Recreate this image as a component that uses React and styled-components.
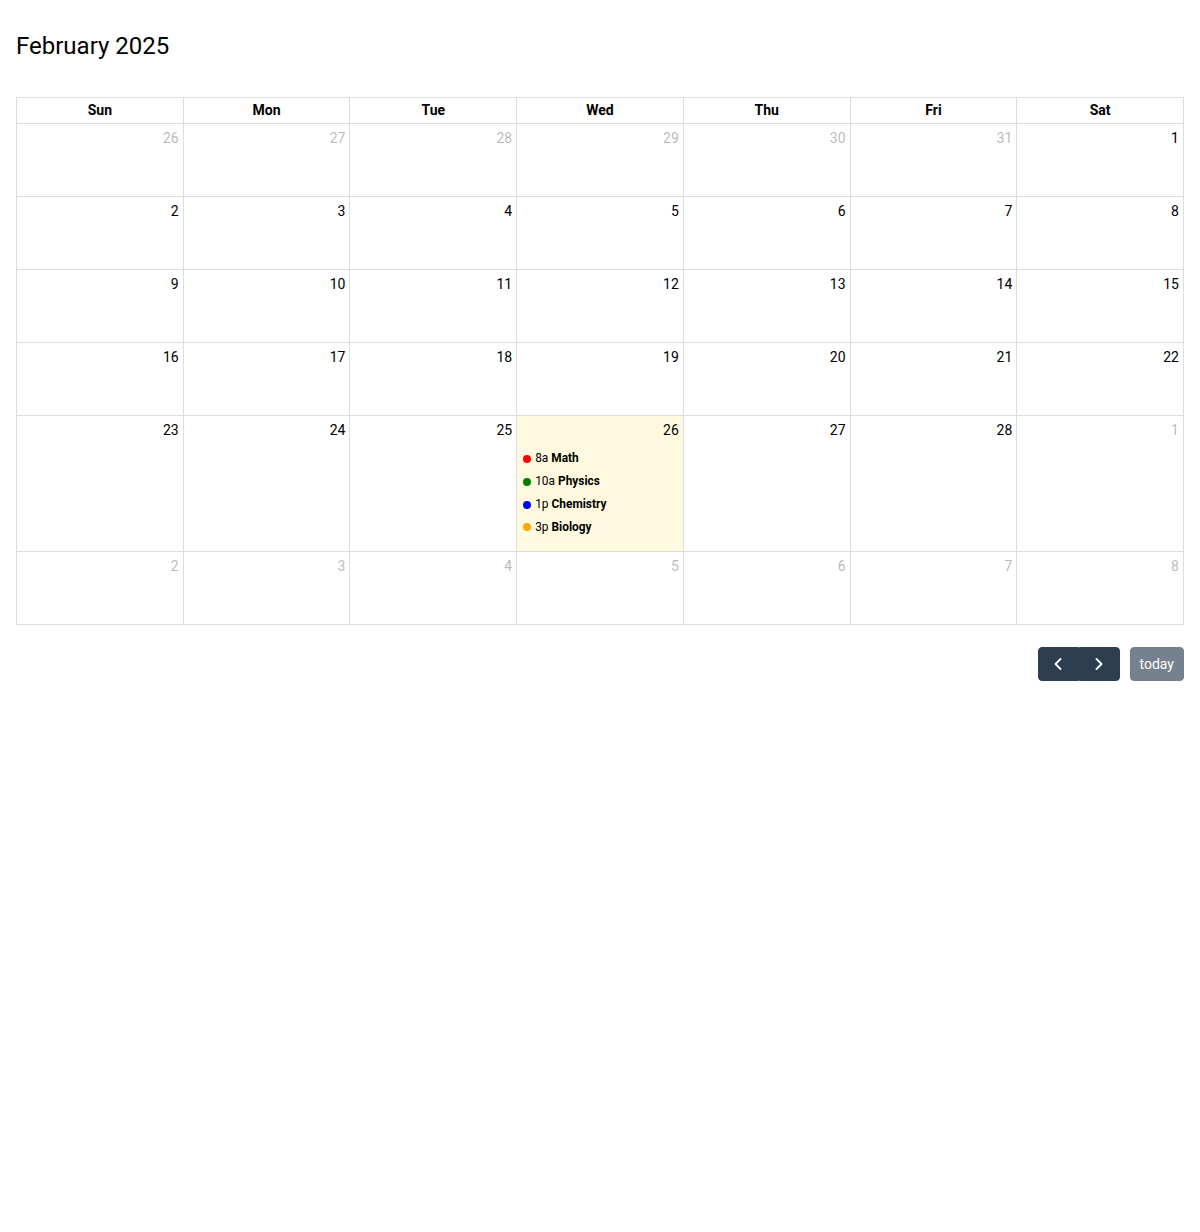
import React from "react";
import styled, { createGlobalStyle } from "styled-components";

const GlobalStyle = createGlobalStyle`
    body {
        margin: 0;
        font-family: Roboto, "Liberation Sans", Arial, sans-serif;
        font-size: 14px;
        color: #000;
        background: #fff;
    }
`;

const Page = styled.div`
    padding: 16px;
`;

const Title = styled.h2`
    margin: 16px 0 36px;
    font-size: 24px;
    font-weight: 400;
    line-height: 29px;
`;

const Grid = styled.div`
    display: grid;
    grid-template-columns: repeat(7, 1fr);
    border-left: 1px solid #ddd;
    border-top: 1px solid #ddd;
`;

const HeadCell = styled.div`
    border-right: 1px solid #ddd;
    border-bottom: 1px solid #ddd;
    padding: 2px 4px;
    font-weight: 700;
    line-height: 21px;
    text-align: center;
`;

const DayCell = styled.div`
    border-right: 1px solid #ddd;
    border-bottom: 1px solid #ddd;
    min-height: 72px;
    display: flex;
    flex-direction: column;
    background: ${({ today }) => (today ? "rgba(255, 220, 40, 0.15)" : "transparent")};
`;

const DayNumber = styled.div`
    padding: 4px;
    line-height: 21px;
    text-align: right;
    color: ${({ other }) => (other ? "rgba(0, 0, 0, 0.3)" : "#000")};
`;

const Events = styled.div`
    padding: 2px 0 13px;
`;

const Event = styled.div`
    display: flex;
    align-items: center;
    margin: 1px 2px 0;
    padding: 2px 0;
    font-size: 11.9px;
    line-height: 17.85px;
    white-space: nowrap;
`;

const Dot = styled.span`
    box-sizing: border-box;
    width: 8px;
    height: 8px;
    margin: 0 4px;
    border: 4px solid ${({ color }) => color};
    border-radius: 4px;
`;

const Time = styled.span`
    margin-right: 3px;
`;

const EventTitle = styled.span`
    font-weight: 700;
`;

const Toolbar = styled.div`
    display: flex;
    justify-content: flex-end;
    align-items: center;
    gap: 10px;
    margin-top: 22px;
`;

const ButtonGroup = styled.div`
    display: flex;
`;

const Button = styled.button`
    display: flex;
    align-items: center;
    justify-content: center;
    height: 34px;
    padding: 0 9px;
    border: 1px solid #2c3e50;
    background: #2c3e50;
    color: #fff;
    font-family: inherit;
    font-size: 14px;
    line-height: 21px;
    border-radius: ${({ group }) =>
        group === "left" ? "4px 0 0 4px" : group === "right" ? "0 4px 4px 0" : "4px"};
    opacity: ${({ disabled }) => (disabled ? 0.65 : 1)};
    cursor: pointer;
`;

const IconBox = styled.span`
    display: flex;
    width: 21px;
    height: 21px;
    align-items: center;
    justify-content: center;
`;

const Chevron = ({ dir }) => (
    <IconBox>
        <svg width="14" height="14" viewBox="0 0 14 14" fill="none">
            <path
                d={dir === "left" ? "M9.5 2 L4.5 7 L9.5 12" : "M4.5 2 L9.5 7 L4.5 12"}
                stroke="#fff"
                strokeWidth="1.9"
                strokeLinecap="round"
                strokeLinejoin="round"
            />
        </svg>
    </IconBox>
);

const days = ["Sun", "Mon", "Tue", "Wed", "Thu", "Fri", "Sat"];

const weeks = [
    [26, 27, 28, 29, 30, 31, 1],
    [2, 3, 4, 5, 6, 7, 8],
    [9, 10, 11, 12, 13, 14, 15],
    [16, 17, 18, 19, 20, 21, 22],
    [23, 24, 25, 26, 27, 28, 1],
    [2, 3, 4, 5, 6, 7, 8],
];

const events = [
    { time: "8a", title: "Math", color: "red" },
    { time: "10a", title: "Physics", color: "green" },
    { time: "1p", title: "Chemistry", color: "blue" },
    { time: "3p", title: "Biology", color: "orange" },
];

const isOther = (w, d) => (w === 0 && d < 6) || (w === 4 && d === 6) || w === 5;

export default function App() {
    return (
        <Page>
            <GlobalStyle />
            <Title>February 2025</Title>
            <Grid>
                {days.map(d => (
                    <HeadCell key={d}>{d}</HeadCell>
                ))}
                {weeks.map((week, w) =>
                    week.map((n, d) => {
                        const today = w === 4 && d === 3;
                        return (
                            <DayCell key={`${w}-${d}`} today={today}>
                                <DayNumber other={isOther(w, d)}>{n}</DayNumber>
                                {today && (
                                    <Events>
                                        {events.map(e => (
                                            <Event key={e.title}>
                                                <Dot color={e.color} />
                                                <Time>{e.time}</Time>
                                                <EventTitle>{e.title}</EventTitle>
                                            </Event>
                                        ))}
                                    </Events>
                                )}
                            </DayCell>
                        );
                    })
                )}
            </Grid>
            <Toolbar>
                <ButtonGroup>
                    <Button group="left" aria-label="prev">
                        <Chevron dir="left" />
                    </Button>
                    <Button group="right" aria-label="next">
                        <Chevron dir="right" />
                    </Button>
                </ButtonGroup>
                <Button disabled>today</Button>
            </Toolbar>
        </Page>
    );
}
